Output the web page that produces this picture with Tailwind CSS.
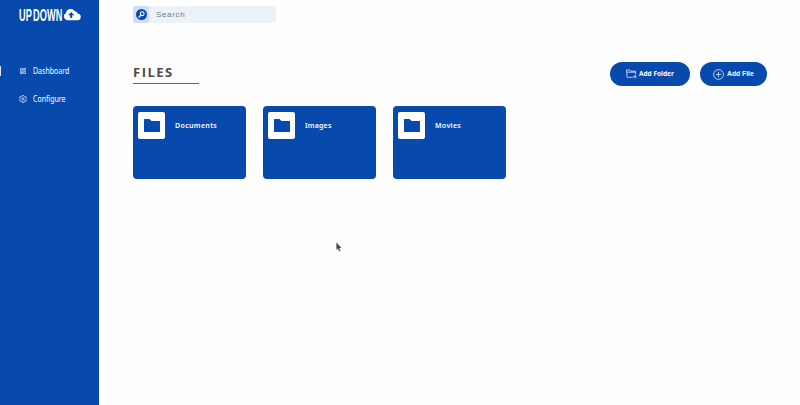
<!DOCTYPE html>
<html lang="en">
<head>
<meta charset="utf-8">
<title>UPDOWN</title>
<script src="https://cdn.jsdelivr.net/npm/@tailwindcss/browser@4"></script>
</head>
<body class="flex h-[405px] w-[800px] overflow-hidden bg-[#fefefe] font-['Noto_Sans',sans-serif]">
<aside class="h-full w-[99px] shrink-0 bg-[#0849ae] text-[7px] leading-[10px] text-white">
  <div class="pt-[6px] pl-[19px]">
    <div class="flex h-[18px] items-start">
      <div class="w-[44px] shrink-0"><span class="block w-[76px] origin-top-left scale-x-[.56] font-['Liberation_Sans',sans-serif] text-[16.4px] leading-[18px] font-bold tracking-[.2px] [word-spacing:-2.5px] whitespace-nowrap">UP DOWN</span></div>
      <svg class="mt-[2px]" width="18" height="13" viewBox="0 0 18 13" fill="#fff"><path fill-rule="evenodd" d="M4.300 12.200A3.700 3.700 0 0 1 3 5.200 4.700 4.700 0 0 1 11.700 3.200 3 3 0 0 1 14.800 5.800 3.200 3.200 0 0 1 14.200 12.200ZM8.200 4 5 7.300h2.200V10h2V7.300h2.200Z"/></svg>
    </div>
  </div>
  <nav class="mt-[42px] flex flex-col gap-[18px]">
    <a class="flex h-[10px] items-center">
      <span class="h-[10px] w-px bg-[#dce8f8]"></span>
      <svg class="ml-[19px]" width="6" height="6" viewBox="0 0 6 6" fill="none" stroke="#d8e6fa" stroke-width=".8"><path d="M.4.4h2v2.800h-2zM3.700.4h1.900v1.500H3.700zM.4 4.300h2v1.300h-2zM3.700 3.100h1.900v2.500H3.700z"/></svg>
      <span class="mt-px ml-[7px] scale-y-[1.150]">Dashboard</span>
    </a>
    <a class="flex h-[10px] items-center">
      <svg class="ml-[19px]" width="8" height="8" viewBox="0 0 24 24" fill="none" stroke="#dce8fa" stroke-width="2.300" stroke-linejoin="round"><path d="M9.500 1.500h5l.7 3 2.200 1.200 3-.9 2.400 4.200-2.200 2v2l2.200 2-2.400 4.200-3-.9-2.200 1.200-.7 3h-5l-.7-3-2.200-1.200-3 .9L1.200 15l2.200-2v-2L1.200 9l2.400-4.200 3 .9 2.200-1.200Z"/><circle cx="12" cy="12" r="3.500"/></svg>
      <span class="mt-px ml-[6px] scale-y-[1.150]">Configure</span>
    </a>
  </nav>
</aside>
<main class="flex-1 pt-[6px] pr-[33px] pl-[34px]">
  <div class="flex h-[17px] w-[143px] items-center rounded-[2px] bg-[#edf2f7]">
    <div class="flex h-[17px] w-[16px] items-center justify-center rounded-[3px] bg-[#cfdef5]">
      <svg width="11" height="11" viewBox="0 0 11 11"><circle cx="5.500" cy="5.500" r="5.500" fill="#0849ae"/><circle cx="6.200" cy="4.700" r="1.900" fill="none" stroke="#fff" stroke-width="1.100"/><path d="M4.800 6.200 2.900 8.100" stroke="#fff" stroke-width="1.300" stroke-linecap="round"/></svg>
    </div>
    <span class="ml-[7px] font-['Liberation_Sans',sans-serif] text-[8px] leading-[10px] tracking-[.65px] text-[#74787d]">Search</span>
  </div>
  <div class="mt-[39px] flex h-[24px] justify-between">
    <h1 class="h-[22px] w-[66px] border-b border-[#666] font-['Open_Sans',sans-serif] text-[13px] leading-[21px] font-bold tracking-[1.5px] text-[#4c4c4c]">FILES</h1>
    <div class="flex gap-[10px] text-[7px] font-bold text-white">
      <button class="flex h-[24px] w-[80px] items-center rounded-full bg-[#0849ae] pl-[16px]">
        <svg width="11" height="10" viewBox="0 0 11 10" fill="none" stroke="#e4eefc" stroke-width=".8" stroke-linejoin="round"><path d="M7 8.300H1.200L.5 1h3.300l.9 1.200h4.800v3.300M1 3.200h8.500M9 6v3.500M7.300 7.700h3.400"/></svg>
        <span class="ml-[2px] origin-left scale-x-[.93] scale-y-[1.100] whitespace-nowrap">Add Folder</span>
      </button>
      <button class="flex h-[24px] w-[67px] items-center rounded-full bg-[#0849ae] pl-[13px]">
        <svg width="11" height="11" viewBox="0 0 11 11" fill="none" stroke="#e4eefc" stroke-width=".8"><circle cx="5.500" cy="5.500" r="4.900"/><path d="M5.500 2.800v5.400M2.800 5.500h5.400"/></svg>
        <span class="ml-[3px] origin-left scale-x-[.97] scale-y-[1.100] font-['Liberation_Sans',sans-serif] whitespace-nowrap">Add File</span>
      </button>
    </div>
  </div>
  <div class="mt-[20px] flex gap-[17px] text-[7px] leading-[10px] font-semibold tracking-[.35px] text-white">
    <div class="flex h-[73px] w-[113px] items-start rounded-[4px] bg-[#0849ae] pt-[6px] pl-[5px]">
      <div class="flex h-[27px] w-[27px] items-center justify-center rounded-[2px] bg-white"><svg width="16" height="13" viewBox="0 0 16 13" fill="#0849ae"><path d="M0 .5Q0 0 .5 0H5.500L7.500 2H15.500Q16 2 16 2.500V12.500Q16 13 15.500 13H.5Q0 13 0 12.500Z"/></svg></div>
      <span class="mt-[9px] ml-[10px] scale-y-[1.120]">Documents</span>
    </div>
    <div class="flex h-[73px] w-[113px] items-start rounded-[4px] bg-[#0849ae] pt-[6px] pl-[5px]">
      <div class="flex h-[27px] w-[27px] items-center justify-center rounded-[2px] bg-white"><svg width="16" height="13" viewBox="0 0 16 13" fill="#0849ae"><path d="M0 .5Q0 0 .5 0H5.500L7.500 2H15.500Q16 2 16 2.500V12.500Q16 13 15.500 13H.5Q0 13 0 12.500Z"/></svg></div>
      <span class="mt-[9px] ml-[10px] scale-y-[1.120] tracking-[.2px]">Images</span>
    </div>
    <div class="flex h-[73px] w-[113px] items-start rounded-[4px] bg-[#0849ae] pt-[6px] pl-[5px]">
      <div class="flex h-[27px] w-[27px] items-center justify-center rounded-[2px] bg-white"><svg width="16" height="13" viewBox="0 0 16 13" fill="#0849ae"><path d="M0 .5Q0 0 .5 0H5.500L7.500 2H15.500Q16 2 16 2.500V12.500Q16 13 15.500 13H.5Q0 13 0 12.500Z"/></svg></div>
      <span class="mt-[9px] ml-[10px] scale-y-[1.120]">Movies</span>
    </div>
  </div>
</main>
<svg class="absolute top-[242px] left-[336px]" width="6" height="10" viewBox="0 0 6 10"><path d="M.4.400v7.400l1.600-1.400 1.100 2.800 1.300-.5-1.100-2.700h2.200Z" fill="#444" stroke="#aaa" stroke-width=".3"/></svg>
</body>
</html>
